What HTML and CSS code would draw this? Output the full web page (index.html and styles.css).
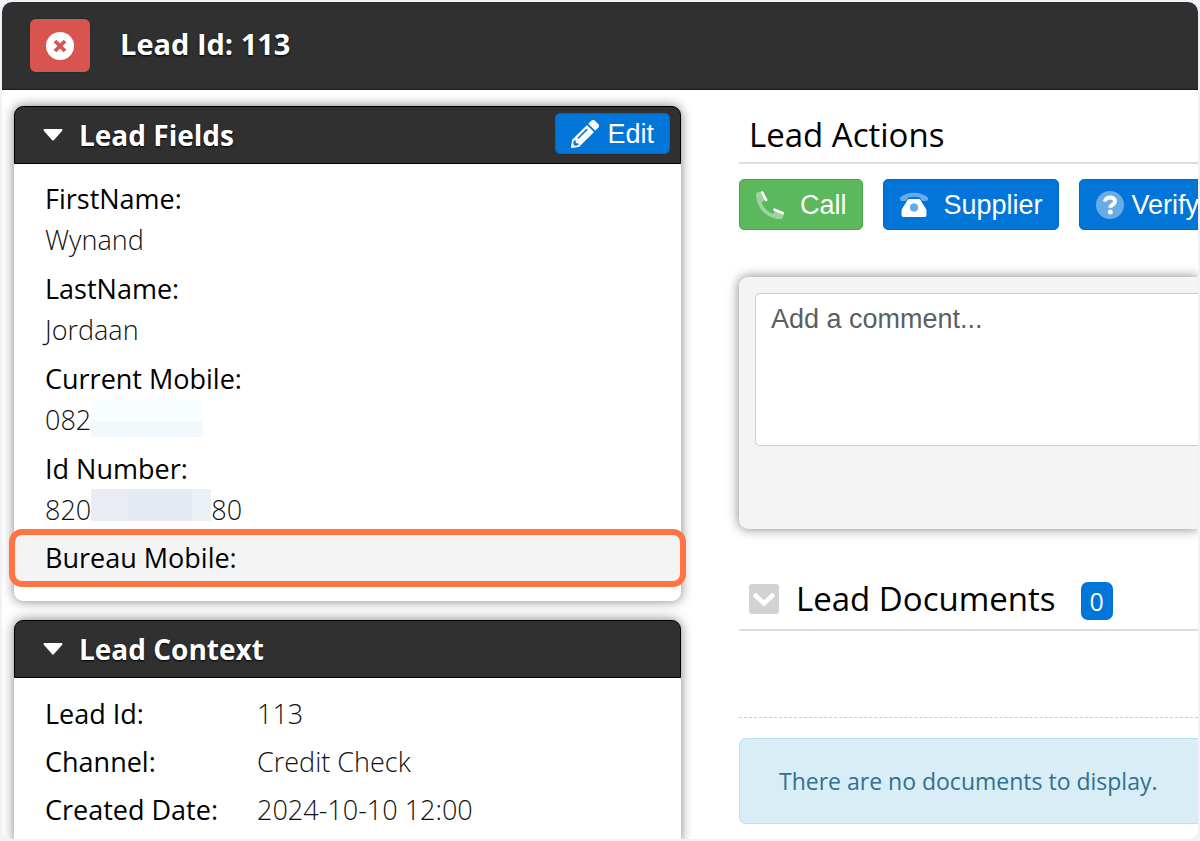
FILE: index.html
```html
<!DOCTYPE html>
<html lang="en">
<head>
<meta charset="utf-8">
<meta name="viewport" content="width=device-width, initial-scale=1">
<title>Lead Id: 113</title>
<link rel="stylesheet" href="styles.css">
</head>
<body>
<div class="frame">
  <header class="topbar">
    <button class="btn btn-close" type="button" aria-label="Close">
      <svg class="icon-close" viewBox="0 0 28 28" aria-hidden="true">
        <circle cx="14" cy="14" r="14" fill="#fff"/>
        <path d="M9 9l10 10m0-10l-10 10" stroke="#d9534f" stroke-width="3.800"/>
      </svg>
    </button>
    <h1 class="topbar-title">Lead Id: 113</h1>
  </header>

  <main class="layout">
    <div class="sidebar">
      <section class="panel">
        <div class="panel-header">
          <svg class="caret" viewBox="0 0 20 12" aria-hidden="true"><path d="M1 0h18q1 1 0 2l-8 9q-1 1-2 0L1 2q-1-1 0-2z" fill="#fff"/></svg>
          <h2 class="panel-title">Lead Fields</h2>
          <button class="btn btn-primary btn-edit" type="button">
            <svg class="icon" viewBox="0 0 512 512" aria-hidden="true"><path fill="#fff" d="M498 142l-46 46c-5 5-13 5-17 0L324 77c-5-5-5-12 0-17l46-46c19-19 49-19 68 0l60 60c19 19 19 49 0 68zm-214-42L22 362 0 484c-3 16 12 30 28 28l122-22 262-262c5-5 5-13 0-17L301 100c-4-5-12-5-17 0zM124 340c-5-6-5-14 0-20l154-154c6-5 14-5 20 0s5 14 0 20L144 340c-6 5-14 5-20 0zm-36 84h48v36l-64 12-32-32 12-64h36v48z"/></svg>
            Edit
          </button>
        </div>
        <div class="panel-body">
          <dl class="fields">
            <div><dt>FirstName:</dt><dd>Wynand</dd></div>
            <div><dt>LastName:</dt><dd>Jordaan</dd></div>
            <div><dt>Current Mobile:</dt><dd>082<span class="mask mask-mobile"></span></dd></div>
            <div><dt>Id Number:</dt><dd>820<span class="mask mask-id"></span>80</dd></div>
            <div class="highlight"><dt>Bureau Mobile:</dt></div>
          </dl>
        </div>
      </section>

      <section class="panel">
        <div class="panel-header">
          <svg class="caret" viewBox="0 0 20 12" aria-hidden="true"><path d="M1 0h18q1 1 0 2l-8 9q-1 1-2 0L1 2q-1-1 0-2z" fill="#fff"/></svg>
          <h2 class="panel-title">Lead Context</h2>
        </div>
        <dl class="context">
          <dt>Lead Id:</dt><dd>113</dd>
          <dt>Channel:</dt><dd>Credit Check</dd>
          <dt>Created Date:</dt><dd>2024-10-10 12:00</dd>
        </dl>
      </section>
    </div>

    <div class="content">
      <h2 class="section-title">Lead Actions</h2>
      <div class="actions">
        <button class="btn btn-success" type="button">
          <svg class="icon" viewBox="0 0 28 28" aria-hidden="true">
            <path fill="#fff" opacity=".4" d="M5 .5L1 1.500Q0 2 0 3C0 17 11 28 25 28q1 0 1.500-1L28 22l-8-3-3 4C12 21 7.500 16.500 5.500 11.500L9 9z"/>
            <path d="M6.200 1.500l4 7.500M18.500 18.700l8.500 3.500" stroke="#fff" stroke-width="2.600" stroke-linecap="round"/>
          </svg>
          Call
        </button>
        <button class="btn btn-primary" type="button">
          <svg class="icon" viewBox="0 0 28 28" aria-hidden="true">
            <path fill="#fff" opacity=".4" d="M0 8V6.500C7 0 21 0 28 6.500V8q0 2-2 2h-3q-1 0-1.500-1L20 6.500C16 5.500 12 5.500 8 6.500L6.500 9Q6 10 5 10H2Q0 10 0 8z"/>
            <path fill="#fff" fill-rule="evenodd" d="M9 8h10q1 0 1.500 1l5.500 9q.5 1 .5 2v4q0 2-2 2h-21q-2 0-2-2v-4q0-1 .5-2L7.500 9Q8 8 9 8zm5 4.500a4 4 0 100 8 4 4 0 000-8z"/>
            <circle cx="14" cy="16.500" r="4" fill="#fff" opacity=".4"/>
          </svg>
          Supplier
        </button>
        <button class="btn btn-primary btn-tight" type="button">
          <svg class="icon" viewBox="0 0 28 28" aria-hidden="true">
            <circle cx="14" cy="14" r="14" fill="#fff" opacity=".4"/>
            <path d="M9 10.500C9.500 5 19 5 19 10.500c0 3-4.700 3-4.700 6.300" fill="none" stroke="#fff" stroke-width="4"/>
            <circle cx="14.300" cy="21" r="2.500" fill="#fff"/>
          </svg>
          Verify
        </button>
      </div>

      <div class="comment-card">
        <textarea class="comment-input" placeholder="Add a comment..." aria-label="Add a comment"></textarea>
      </div>

      <div class="section-title documents-title">
        <button class="toggle" type="button" aria-label="Toggle documents">
          <svg viewBox="0 0 30 30" aria-hidden="true"><rect width="30" height="30" rx="3" fill="#d2d2d2"/><path d="M6.500 11.500l8.500 8 8.500-8" fill="none" stroke="#fff" stroke-width="4.500" stroke-linecap="round"/></svg>
        </button>
        <h2 class="documents-heading">Lead Documents</h2>
        <span class="badge">0</span>
      </div>
      <hr class="divider">
      <p class="alert">There are no documents to display.</p>
    </div>
  </main>
</div>
</body>
</html>
```
FILE: styles.css
```css
* { box-sizing: border-box; }

body {
  margin: 0;
  height: 100vh;
  padding: 2px;
  background: #f1f1f7;
  color: #000;
  font-family: "Open Sans", "Noto Sans", sans-serif;
  font-size: 27px;
}

h1, h2, p, dl, dd { margin: 0; }

.frame {
  height: 100%;
  overflow: hidden;
  border-radius: 10px;
  background: #fff;
}

.topbar {
  display: flex;
  align-items: center;
  gap: 29px;
  height: 88px;
  padding: 0 27px;
  border-bottom: 1px solid #1a1a1a;
  background: #303030;
}

.topbar-title {
  padding-bottom: 3px;
  color: #fff;
  font-size: 29px;
  font-weight: 700;
  line-height: 40px;
  text-shadow: 0 1px 2px #000;
}

.btn {
  display: flex;
  align-items: center;
  gap: 16px;
  height: 51px;
  padding: 0 15px 0 16px;
  border: 1px solid;
  border-radius: 5px;
  color: #fff;
  font: 27px/32px "Liberation Sans", Arial, sans-serif;
  white-space: nowrap;
}

.btn-close {
  justify-content: center;
  width: 62px;
  height: 55px;
  padding: 0;
  border-color: #1f2f2f;
  border-radius: 7px;
  background: #d9534f;
}

.icon-close { width: 28px; height: 28px; }
.icon { flex: none; width: 28px; height: 28px; }

.btn-primary { border-color: #0068cc; background: #0275d8; }
.btn-success { border-color: #44aa44; background: #5cb85c; }
.btn-tight { gap: 8px; }

.btn-edit {
  align-self: flex-start;
  gap: 8px;
  height: 41px;
  margin: 6px 0 0 auto;
  padding: 0 15px;
}

.layout {
  display: grid;
  grid-template-columns: minmax(0, 667fr) minmax(0, 459fr);
  gap: 58px;
  padding: 16px 0 0 12px;
}

.sidebar {
  display: flex;
  flex-direction: column;
  gap: 19px;
}

.panel {
  border-radius: 9px;
  background: #fff;
  box-shadow: 0 0 12px rgba(0, 0, 0, .5);
}

.panel-header {
  display: flex;
  align-items: center;
  height: 58px;
  padding: 0 10px 0 28px;
  border: 1px solid #000;
  border-radius: 9px 9px 0 0;
  background: #303030;
}

.caret {
  width: 20px;
  height: 12px;
  margin-right: 16px;
}

.panel-title {
  color: #fff;
  font-size: 28px;
  font-weight: 700;
  line-height: 40px;
  text-shadow: 0 1px 2px #000;
}

.panel-body { padding: 14px 0; }

dt { font-weight: 500; }
dd { color: #111; font-weight: 300; }

.fields {
  display: flex;
  flex-direction: column;
  gap: 8px;
  line-height: 41px;
}

.fields > div { padding: 0 31px; }
.fields dd { display: flex; align-items: center; }

.mask { align-self: flex-start; height: 32px; }
.mask-mobile { width: 112px; height: 38px; background: linear-gradient(#f8fdff 58%, #f3f8fc 58%); }
.mask-id { width: 120px; background: linear-gradient(90deg, #e9edf3 30%, #e3eaf3 30%, #e3eaf3 84%, #ebf0f4 84%); }

.fields .highlight {
  margin: -9px -5px 0;
  padding: 2px 30px 3px;
  border: 6px solid #ff7443;
  border-radius: 13px;
  background: #f4f4f4;
}

.context {
  display: grid;
  grid-template-columns: 212px 1fr;
  padding: 12px 31px;
  line-height: 48px;
}

.section-title {
  height: 58px;
  padding: 9px 10px;
  border-bottom: 2px solid #ddd;
  font-size: 33px;
  font-weight: 500;
  line-height: 40px;
}

.actions {
  display: flex;
  gap: 20px;
  margin-top: 15px;
}

.comment-card {
  margin-top: 47px;
  height: 252px;
  padding: 16px 0 0 16px;
  border-radius: 9px 0 0 9px;
  background: #f4f4f4;
  box-shadow: 0 0 12px rgba(0, 0, 0, .5);
}

.comment-input {
  display: block;
  width: 100%;
  height: 153px;
  padding: 9px 15px;
  border: 1px solid #ccc;
  border-right: 0;
  border-radius: 5px 0 0 5px;
  background: #fff;
  color: #55595c;
  font: 27px/32px "Liberation Sans", Arial, sans-serif;
  resize: none;
}

.comment-input::placeholder { color: #5b5f62; }

.documents-title {
  display: flex;
  align-items: center;
  height: 64px;
  margin-top: 38px;
  padding: 10px 10px 8px;
}

.toggle {
  width: 30px;
  height: 30px;
  margin-right: 17px;
  padding: 0;
  border: 0;
  background: none;
}

.toggle svg { display: block; }

.documents-heading { font-size: 33px; font-weight: 500; }

.badge {
  margin: 4px 0 0 25px;
  padding: 0 9px;
  border-radius: 7px;
  background: #0275d8;
  color: #fff;
  font-size: 25px;
  line-height: 38px;
}

.divider {
  margin: 86px 0 20px;
  border: 0;
  border-top: 1px dashed #ccc;
}

.alert {
  padding: 21px 39px;
  border: 1px solid #bcdff1;
  border-right: 0;
  border-radius: 7px 0 0 7px;
  background: #d9edf7;
  color: #31708f;
  font-size: 23px;
  line-height: 42px;
  white-space: nowrap;
}
```
